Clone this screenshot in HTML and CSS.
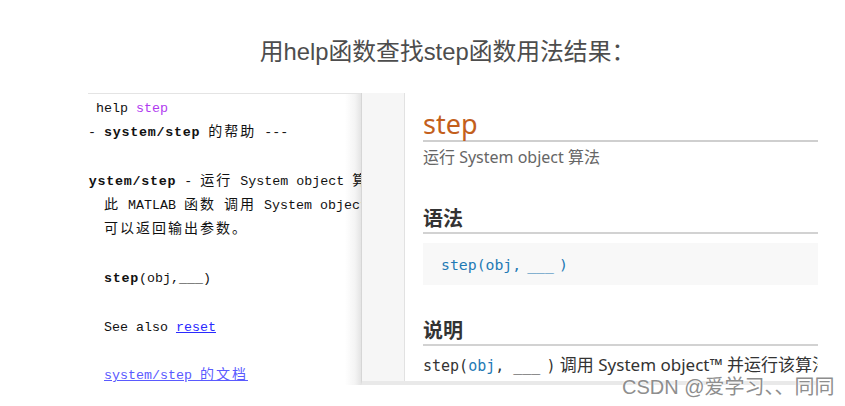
FILE: index.html
```html
<!DOCTYPE html>
<html lang="zh">
<head>
<meta charset="utf-8">
<title>help step</title>
<link rel="stylesheet" href="styles.css">
</head>
<body>
<div class="title">用help函数查找step函数用法结果：</div>
<div class="figure">
  <div class="cmd">
    <div class="cmd-text">
      <div class="ln">  help <span class="kw">step</span></div>
      <div class="ln">-- <b>system/step</b> <span class="cj">的帮助</span> ---</div>
      <div class="ln"></div>
      <div class="ln"><b>system/step</b> - <span class="cj">运行</span> System object <span class="cj">算法</span></div>
      <div class="ln">   <span class="cj">此</span> MATLAB <span class="cj">函数</span> <span class="cj">调用</span> System object <span class="cj">并运行</span></div>
      <div class="ln">   <span class="cj">可以返回输出参数。</span></div>
      <div class="ln"></div>
      <div class="ln">   <b>step</b>(obj,___)</div>
      <div class="ln"></div>
      <div class="ln">   See also <a class="lnk" href="#">reset</a></div>
      <div class="ln"></div>
      <div class="ln">   <a class="lnk2" href="#">system/step <span class="cj">的文档</span></a></div>
    </div>
  </div>
  <div class="doc">
    <div class="doc-side"></div>
    <div class="doc-main">
      <h1 class="doc-title">step</h1>
      <div class="doc-sub">运行 System object 算法</div>
      <h2 class="doc-h">语法</h2>
      <div class="code-box"><code class="code">step(obj,<span class="ul">___</span>)</code></div>
      <h2 class="doc-h doc-h2">说明</h2>
      <p class="desc"><code class="mono">step(<span class="blue">obj</span>, <span class="ul2">___</span>)</code> 调用 System object™ 并运行该算法</p>
    </div>
  </div>
</div>
<div class="wm">CSDN @爱学习、、同同</div>
</body>
</html>
```
FILE: styles.css
```css
html, body {
  margin: 0;
  padding: 0;
  background: #ffffff;
}
body {
  width: 845px;
  height: 406px;
  position: relative;
  overflow: hidden;
}
.title {
  height: 93px;
  box-sizing: border-box;
  padding-top: 37px;
  padding-left: 50px;
  text-align: center;
  font-family: "Liberation Sans", "Noto Sans CJK SC", sans-serif;
  font-size: 23.8px;
  line-height: 30px;
  color: #4d4d4d;
}
.figure {
  margin-left: 88px;
  width: 730px;
  height: 292px;
  display: flex;
}
.cmd {
  width: 273px;
  flex: none;
  border-top: 1px solid #e4e4e4;
  box-sizing: border-box;
  overflow: hidden;
  background: linear-gradient(to right, #ffffff calc(100% - 16px), #f4f4f4 calc(100% - 6px), #e4e4e4);
}
.cmd-text {
  margin: 0 0 0 -8px;
  padding-top: 3px;
  font-family: "Liberation Mono", monospace;
  font-size: 13.33px;
  color: #111;
}
.ln {
  height: 24.3px;
  line-height: 24.3px;
  white-space: pre;
  overflow: hidden;
}
.cmd-text b {
  font-weight: bold;
  letter-spacing: 0.75px;
  color: #111;
}
.cj {
  font-family: "Noto Sans CJK SC", sans-serif;
  font-size: 14px;
  line-height: 1;
  letter-spacing: 2px;
  font-weight: normal;
}
.kw {
  color: #b03af0;
}
.lnk {
  color: #2a2aff;
  text-decoration: underline;
}
.lnk2 {
  color: #5a5aff;
  text-decoration: underline;
}
.doc {
  flex: 1;
  display: flex;
  border-left: 1px solid #d6d6d6;
  border-bottom: 4px solid #e9e9e9;
  overflow: hidden;
  background: #fff;
}
.doc-side {
  width: 42px;
  flex: none;
  background: #f6f6f6;
  border-right: 1px solid #e2e2e2;
}
.doc-main {
  flex: 1;
  padding-left: 18px;
  overflow: hidden;
  font-family: "Noto Sans", "Noto Sans CJK SC", sans-serif;
  white-space: nowrap;
}
.doc-title {
  margin: 15px 0 0;
  font-size: 27px;
  line-height: 32px;
  font-weight: normal;
  color: #c35f1c;
  border-bottom: 2px solid #cfcfcf;
}
.doc-sub {
  margin-top: 3px;
  font-size: 16px;
  line-height: 24px;
  color: #666;
}
.doc-h {
  margin: 36px 0 0;
  font-size: 20px;
  line-height: 27px;
  font-weight: bold;
  color: #333;
  border-bottom: 2px solid #d2d2d2;
}
.code-box {
  margin-top: 9px;
  height: 42px;
  box-sizing: border-box;
  padding: 10px 18px;
  background: #f8f8f8;
  line-height: 22px;
}
.code {
  font-family: "DejaVu Sans Mono", monospace;
  font-size: 14.8px;
  color: #1f7ab5;
}
.ul {
  margin: 0 5px 0 6px;
}
.ul2 {
  margin-right: 6px;
}
.doc-h2 {
  margin-top: 32px;
}
.desc {
  margin: 7px 0 0;
  font-size: 17px;
  line-height: 24px;
  color: #333;
}
.mono {
  font-family: "DejaVu Sans Mono", monospace;
  font-size: 15px;
  color: #333;
}
.blue {
  color: #1f7ab5;
}
.wm {
  position: absolute;
  left: 622px;
  top: 374px;
  font-family: "Liberation Sans", "Noto Sans CJK SC", sans-serif;
  font-size: 20px;
  line-height: 26px;
  color: #8e8e8e;
  text-shadow: 0 0 2px #fff, 0 0 2px #fff;
}
```
